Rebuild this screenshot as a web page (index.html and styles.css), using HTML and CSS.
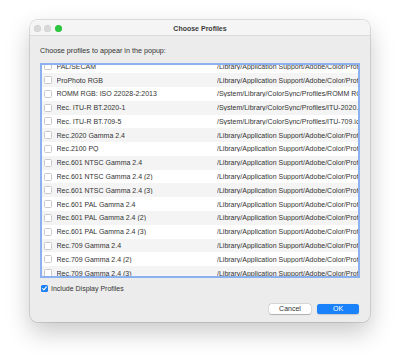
FILE: index.html
```html
<!DOCTYPE html>
<html>
<head>
<meta charset="utf-8">
<link rel="stylesheet" href="styles.css">
</head>
<body>
<div class="window">
  <div class="titlebar">
    <div class="lights">
      <span class="light"></span>
      <span class="light"></span>
      <span class="light green"></span>
    </div>
    <div class="title">Choose Profiles</div>
    <div class="spacer"></div>
  </div>
  <div class="content">
    <div class="label">Choose profiles to appear in the popup:</div>
    <div class="table">
      <div class="rows">
        <div class="row"><span class="cb"></span><span class="name">PAL/SECAM</span><span class="path">/Library/Application Support/Adobe/Color/Profiles/Recommended</span></div>
        <div class="row"><span class="cb"></span><span class="name">ProPhoto RGB</span><span class="path">/Library/Application Support/Adobe/Color/Profiles/ProPhoto.icm</span></div>
        <div class="row"><span class="cb"></span><span class="name">ROMM RGB: ISO 22028-2:2013</span><span class="path">/System/Library/ColorSync/Profiles/ROMM RGB.icc</span></div>
        <div class="row"><span class="cb"></span><span class="name">Rec. ITU-R BT.2020-1</span><span class="path">/System/Library/ColorSync/Profiles/ITU-2020.icc</span></div>
        <div class="row"><span class="cb"></span><span class="name">Rec. ITU-R BT.709-5</span><span class="path">/System/Library/ColorSync/Profiles/ITU-709.icc</span></div>
        <div class="row"><span class="cb"></span><span class="name">Rec.2020 Gamma 2.4</span><span class="path">/Library/Application Support/Adobe/Color/Profiles/Rec2020</span></div>
        <div class="row"><span class="cb"></span><span class="name">Rec.2100 PQ</span><span class="path">/Library/Application Support/Adobe/Color/Profiles/Rec2100</span></div>
        <div class="row"><span class="cb"></span><span class="name">Rec.601 NTSC Gamma 2.4</span><span class="path">/Library/Application Support/Adobe/Color/Profiles/Rec601</span></div>
        <div class="row"><span class="cb"></span><span class="name">Rec.601 NTSC Gamma 2.4 (2)</span><span class="path">/Library/Application Support/Adobe/Color/Profiles/Rec601</span></div>
        <div class="row"><span class="cb"></span><span class="name">Rec.601 NTSC Gamma 2.4 (3)</span><span class="path">/Library/Application Support/Adobe/Color/Profiles/Rec601</span></div>
        <div class="row"><span class="cb"></span><span class="name">Rec.601 PAL Gamma 2.4</span><span class="path">/Library/Application Support/Adobe/Color/Profiles/Rec601</span></div>
        <div class="row"><span class="cb"></span><span class="name">Rec.601 PAL Gamma 2.4 (2)</span><span class="path">/Library/Application Support/Adobe/Color/Profiles/Rec601</span></div>
        <div class="row"><span class="cb"></span><span class="name">Rec.601 PAL Gamma 2.4 (3)</span><span class="path">/Library/Application Support/Adobe/Color/Profiles/Rec601</span></div>
        <div class="row"><span class="cb"></span><span class="name">Rec.709 Gamma 2.4</span><span class="path">/Library/Application Support/Adobe/Color/Profiles/Rec709</span></div>
        <div class="row"><span class="cb"></span><span class="name">Rec.709 Gamma 2.4 (2)</span><span class="path">/Library/Application Support/Adobe/Color/Profiles/Rec709</span></div>
        <div class="row"><span class="cb"></span><span class="name">Rec.709 Gamma 2.4 (3)</span><span class="path">/Library/Application Support/Adobe/Color/Profiles/Rec709</span></div>
      </div>
    </div>
    <div class="include">
      <span class="cb-on"><svg width="7" height="7" viewBox="0 0 7 7"><path d="M1.6 3.6 L2.9 4.9 L5.4 1.9" fill="none" stroke="#fff" stroke-width="1.1" stroke-linecap="round" stroke-linejoin="round"/></svg></span>
      <span class="include-label">Include Display Profiles</span>
    </div>
    <div class="buttons">
      <div class="btn cancel">Cancel</div>
      <div class="btn ok">OK</div>
    </div>
  </div>
</div>
</body>
</html>
```

FILE: styles.css
```css
html, body {
  margin: 0;
  padding: 0;
  background: #ffffff;
  width: 400px;
  height: 362px;
  overflow: hidden;
  font-family: "Liberation Sans", Arial, sans-serif;
}
.window {
  margin: 20px 0 0 30px;
  width: 340px;
  height: 302px;
  box-sizing: border-box;
  border-radius: 7px;
  background: #ececec;
  box-shadow: 0 0 0 0.5px rgba(0,0,0,0.22), 0 10px 24px rgba(0,0,0,0.22);
  overflow: hidden;
  display: flex;
  flex-direction: column;
}
.titlebar {
  height: 15px;
  flex: none;
  background: #f5f5f5;
  border-bottom: 1px solid #dadada;
  display: grid;
  grid-template-columns: 1fr auto 1fr;
  align-items: center;
}
.lights {
  display: flex;
  gap: 3.8px;
  padding-left: 3.5px;
  padding-top: 1.5px;
}
.light {
  width: 7px;
  height: 7px;
  border-radius: 50%;
  background: #d9d9d9;
  box-shadow: inset 0 0 0 0.4px rgba(0,0,0,0.08);
}
.light.green {
  background: #2bc83f;
}
.title {
  font-size: 7px;
  font-weight: bold;
  color: #3c3c3c;
  padding-top: 1px;
}
.content {
  flex: 1;
  display: flex;
  flex-direction: column;
  padding: 9.5px 11px 0 10px;
}
.label {
  font-size: 7.2px;
  line-height: 9px;
  color: #333;
}
.table {
  margin-top: 8.5px;
  width: 320px;
  height: 215px;
  box-sizing: border-box;
  border: 2px solid #8cb1f1;
  background: #fff;
  overflow: hidden;
}
.rows {
  margin-top: -5.7px;
}
.row {
  height: 13.8px;
  display: flex;
  align-items: center;
  font-size: 7px;
  color: #333;
  white-space: nowrap;
  padding-left: 1.5px;
}
.row:nth-child(even) {
  background: #f4f4f4;
}
.cb {
  flex: none;
  width: 6px;
  height: 6px;
  border: 0.5px solid #c9c9c9;
  border-radius: 1.5px;
  background: #fff;
}
.name {
  flex: none;
  width: 160.5px;
  margin-left: 5px;
  overflow: hidden;
}
.path {
  flex: 1;
  overflow: hidden;
}
.include {
  margin-top: 6px;
  display: flex;
  align-items: center;
  height: 8px;
}
.cb-on {
  flex: none;
  width: 7px;
  height: 7px;
  border-radius: 1.5px;
  background: #1c7ff4;
  margin-left: 1px;
  display: flex;
}
.include-label {
  font-size: 7px;
  color: #333;
  margin-left: 3px;
}
.buttons {
  margin-top: 11.5px;
  display: flex;
  justify-content: flex-end;
  gap: 6px;
}
.btn {
  width: 42px;
  height: 10px;
  border-radius: 2.5px;
  font-size: 7px;
  line-height: 10px;
  text-align: center;
}
.cancel {
  background: #fff;
  color: #333;
  box-shadow: 0 0 0 0.4px rgba(0,0,0,0.15), 0 0.5px 1px rgba(0,0,0,0.2);
}
.ok {
  background: #1a82fb;
  color: #fff;
  box-shadow: 0 0.5px 1px rgba(0,0,0,0.15);
}
```
